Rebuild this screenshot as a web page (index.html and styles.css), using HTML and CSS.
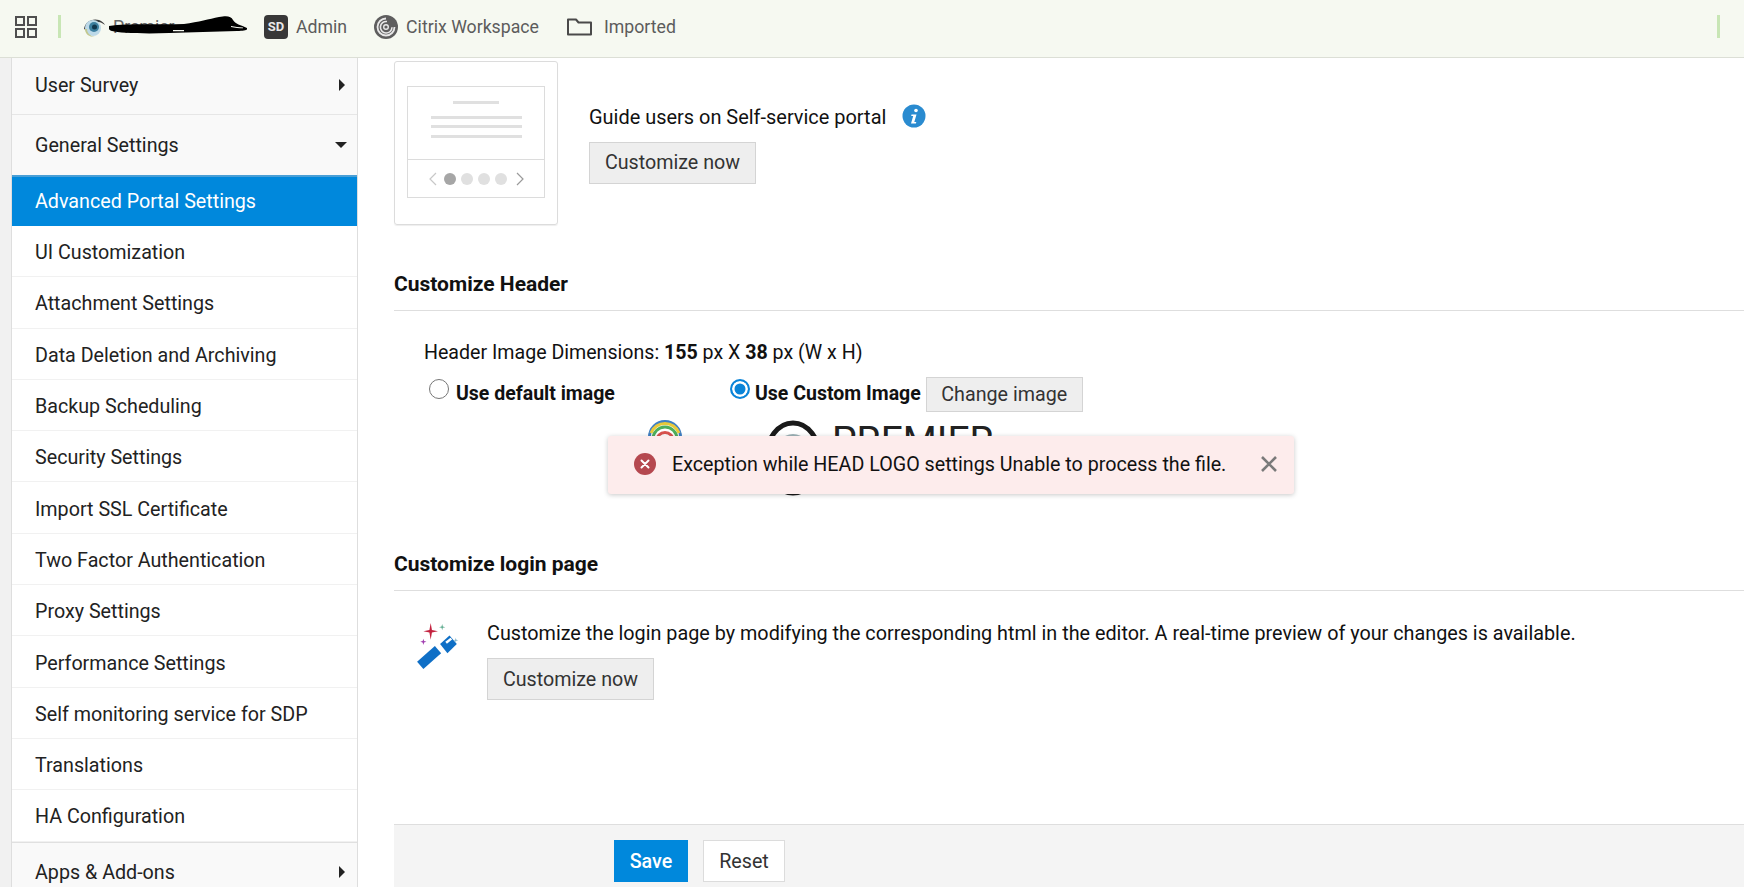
FILE: index.html
```html
<!DOCTYPE html>
<html lang="en">
<head>
<meta charset="utf-8">
<title>Advanced Portal Settings</title>
<link rel="stylesheet" href="styles.css">
</head>
<body>
<header class="topbar">
  <svg class="grid-icon" viewBox="0 0 22 22" width="22" height="22"><g fill="none" stroke="#4f4f4f" stroke-width="2"><rect x="1" y="1" width="8" height="8"/><rect x="13" y="1" width="8" height="8"/><rect x="1" y="13" width="8" height="8"/><rect x="13" y="13" width="8" height="8"/></g></svg>
  <span class="tick"></span>
  <div class="bookmark bm-eye">
    <svg viewBox="0 0 24 20" width="24" height="20"><path d="M2 12C3 5 10 1 17 3c3 1 5 3 6 5-3-3-8-4-12-3C7 6 4 9 4 13z" fill="#3c3c3c"/><ellipse cx="11" cy="11" rx="8" ry="8" fill="#bcd9e8"/><circle cx="12" cy="10" r="5" fill="#3c7f9f"/><circle cx="12.500" cy="10" r="2.500" fill="#10364d"/><path d="M3 12c0 5 4 8 10 8-5-1-8-4-8-8z" fill="#c2c88f"/></svg>
    <span class="bm-hidden">Premier</span>
    <svg class="scribble" viewBox="0 0 138 18" width="138" height="18"><path d="M0 10C20 7 50 9 75 8 90 6 100 3 110 1c8-1.500 12-1 14 3 2 4 8 5 14 8 1 2-2 3-10 3L60 17c-25 1-50 0-57-2C0 14-1 12 0 10z" fill="#000"/><path d="M64 14h11v1.200H64zM122 10c4 1 8 1 12 1.500v.8c-4 0-8-.3-12-1.300z" fill="#f6f9f1"/></svg>
  </div>
  <div class="bookmark bm-admin">
    <span class="sd-badge">SD</span>
    <span>Admin</span>
  </div>
  <div class="bookmark bm-citrix">
    <svg viewBox="0 0 24 24" width="24" height="24"><circle cx="12" cy="12" r="12" fill="#5e5e5e"/><path d="M12 3.500a8.500 8.500 0 1 0 8.500 8.500" fill="none" stroke="#e8e8e8" stroke-width="1.800"/><path d="M13 6.500a5.800 5.800 0 1 0 5 5.800" fill="none" stroke="#e8e8e8" stroke-width="1.600"/><circle cx="12" cy="12" r="2.300" fill="none" stroke="#e8e8e8" stroke-width="1.400"/></svg>
    <span>Citrix Workspace</span>
  </div>
  <div class="bookmark bm-folder">
    <svg viewBox="0 0 25 18" width="25" height="18"><path d="M1 16.500V1.500h8l2.500 3H24v12z" fill="none" stroke="#4a4a4a" stroke-width="2" stroke-linejoin="round"/></svg>
    <span>Imported</span>
  </div>
  <span class="tick tick-end"></span>
</header>

<div class="shell">
  <div class="strip"></div>
  <nav class="sidebar">
    <div class="nav-group nav-survey">User Survey<span class="caret-right"></span></div>
    <div class="nav-group nav-general">General Settings<span class="caret-down"></span></div>
    <div class="nav-item nav-active">Advanced Portal Settings</div>
    <div class="nav-item">UI Customization</div>
    <div class="nav-item">Attachment Settings</div>
    <div class="nav-item">Data Deletion and Archiving</div>
    <div class="nav-item">Backup Scheduling</div>
    <div class="nav-item">Security Settings</div>
    <div class="nav-item">Import SSL Certificate</div>
    <div class="nav-item">Two Factor Authentication</div>
    <div class="nav-item">Proxy Settings</div>
    <div class="nav-item">Performance Settings</div>
    <div class="nav-item">Self monitoring service for SDP</div>
    <div class="nav-item">Translations</div>
    <div class="nav-item">HA Configuration</div>
    <div class="nav-group nav-apps">Apps &amp; Add-ons<span class="caret-right"></span></div>
  </nav>

  <main class="content">
    <section class="guide">
      <div class="preview-card">
        <div class="preview">
          <div class="preview-top">
            <span class="pl pl-short"></span>
            <span class="pl pl-one"></span>
            <span class="pl pl-two"></span>
            <span class="pl pl-three"></span>
          </div>
          <div class="preview-nav">
            <svg class="chev-left" viewBox="0 0 8 14" width="8" height="14"><path d="M7 1 1 7l6 6" fill="none" stroke="#c8c8c8" stroke-width="1.200"/></svg>
            <span class="dot dot-on"></span><span class="dot"></span><span class="dot"></span><span class="dot"></span>
            <svg class="chev-right" viewBox="0 0 8 14" width="8" height="14"><path d="m1 1 6 6-6 6" fill="none" stroke="#9a9a9a" stroke-width="1.200"/></svg>
          </div>
        </div>
      </div>
      <div class="guide-text">
        <div class="guide-line">Guide users on Self-service portal
          <svg class="info" viewBox="0 0 24 24" width="24" height="24"><circle cx="12" cy="12" r="11.500" fill="#2a8bd0"/><circle cx="14" cy="6.500" r="1.800" fill="#fff"/><path d="M9.500 10.500h5l-2.200 7.500h2l-.4 1.500H9l2.200-7.500H9.200z" fill="#fff"/></svg>
        </div>
        <button class="btn">Customize now</button>
      </div>
    </section>

    <h2 class="section-title title-header">Customize Header</h2>
    <div class="header-form">
      <p class="dims">Header Image Dimensions: <b>155</b> px X <b>38</b> px (W x H)</p>
      <div class="radio-row">
        <span class="radio"></span><label class="radio-label label-default">Use default image</label>
        <span class="radio radio-on"></span><label class="radio-label label-custom">Use Custom Image</label>
        <button class="btn btn-change">Change image</button>
      </div>
      <div class="logo-row">
        <svg class="logo-rings" viewBox="0 0 34 34" width="34" height="34"><g fill="none" stroke-width="3"><circle cx="17" cy="17" r="15.500" stroke="#3f7fc4"/><path d="M3 13A15 15 0 0 1 31 13" stroke="#e8c93a"/><circle cx="17" cy="19" r="12" stroke="#4fae5c"/><circle cx="17" cy="21" r="8.500" stroke="#d9534f"/></g></svg>
        <svg class="logo-arc" viewBox="0 0 64 76" width="64" height="76"><ellipse cx="32" cy="38" rx="27" ry="35" fill="none" stroke="#1a1a1a" stroke-width="5"/><ellipse cx="32" cy="38" rx="18" ry="23" fill="none" stroke="#9fb4b8" stroke-width="2"/></svg>
        <span class="logo-name">PREMIER</span>
      </div>
    </div>

    <h2 class="section-title title-login">Customize login page</h2>
    <div class="login-row">
      <svg class="wand" viewBox="0 0 40 44" width="42" height="46"><path d="M13 0l1.200 6.800L20 8l-5.800 1.200L13 16l-1.200-6.800L6 8l5.800-1.200z" fill="#c3223f"/><path d="M24 1l.6 2.400L27 4l-2.400.6L24 7l-.6-2.400L21 4l2.400-.6z" fill="#5aa98c"/><path d="M6 15l.7 2.300L9 18l-2.300.7L6 21l-.7-2.300L3 18l2.300-.7z" fill="#a23fb0"/><path d="M37 14l.5 2L39.500 16.500l-2 .5-.5 2-.5-2-2-.5 2-.5z" fill="#7fb3c8"/><path d="M0 37 17 22l6 7L6 44z" fill="#0f6fc6"/><path d="M22 20l9-8 7 8-9 9z" fill="#0f6fc6"/><path d="M27 18l5-4 1.500 1.800-5 4z" fill="#fff"/></svg>
      <div class="login-text">
        <p>Customize the login page by modifying the corresponding html in the editor. A real-time preview of your changes is available.</p>
        <button class="btn">Customize now</button>
      </div>
    </div>

    <footer class="actions">
      <button class="btn-save">Save</button>
      <button class="btn-reset">Reset</button>
    </footer>
  </main>
</div>

<div class="toast">
  <svg class="toast-icon" viewBox="0 0 22 22" width="22" height="22"><circle cx="11" cy="11" r="11" fill="#b5484f"/><path d="M7.500 7.500l7 7m0-7l-7 7" stroke="#fff" stroke-width="2" stroke-linecap="round"/></svg>
  <span class="toast-text">Exception while HEAD LOGO settings Unable to process the file.</span>
  <svg class="toast-close" viewBox="0 0 18 18" width="18" height="18"><path d="M2 2l14 14M16 2L2 16" stroke="#7a7a7a" stroke-width="2.600"/></svg>
</div>
</body>
</html>
```
FILE: styles.css
```css
* { box-sizing: border-box; }
html, body { margin: 0; height: 887px; overflow: hidden; }
body {
  font-family: Roboto, "Liberation Sans", sans-serif;
  font-size: 19.7px;
  color: #111;
  background: #fff;
  display: flex;
  flex-direction: column;
}
.topbar {
  height: 58px;
  flex: none;
  background: #f6f9f1;
  border-bottom: 1px solid #dcdfd6;
  display: flex;
  align-items: center;
  padding-left: 15px;
  color: #5c5c5c;
  font-size: 17.7px;
  position: relative;
  padding-bottom: 4px;
}
.tick { width: 3px; height: 23px; background: #c8e6b5; margin-left: 21px; flex: none; }
.tick-end { margin-left: auto; margin-right: 24px; }
.bookmark { display: flex; align-items: center; flex: none; line-height: 24px; }
.bm-eye { margin-left: 21px; width: 166px; position: relative; }
.bm-hidden { margin-left: 7px; color: #666; }
.scribble { position: absolute; left: 27px; top: 1px; }
.bm-admin { margin-left: 16px; gap: 8px; }
.sd-badge {
  width: 24px; height: 24px; border-radius: 4px;
  background: #383838; color: #e8e8e8;
  font-size: 13px; font-weight: 700;
  display: flex; align-items: center; justify-content: center;
}
.bm-citrix { margin-left: 27px; gap: 8px; }
.bm-folder { margin-left: 28px; gap: 12px; }

.shell { flex: 1; display: flex; min-height: 0; }
.strip { width: 11px; background: #f1f1f1; flex: none; }
.sidebar {
  width: 347px;
  flex: none;
  border-left: 1px solid #dedede;
  border-right: 1px solid #dedede;
  background: #fff;
  overflow: hidden;
}
.nav-group {
  background: #f9f9f9;
  display: flex;
  align-items: center;
  justify-content: space-between;
  padding: 0 12px 0 23px;
  border-bottom: 1px solid #e6e6e6;
  color: #222;
}
.nav-survey { height: 57px; padding-bottom: 2px; }
.nav-general { height: 60px; padding-bottom: 0; border-bottom: 0; }
.nav-apps { height: 60px; padding-bottom: 0; border-top: 1px solid #e0e0e0; border-bottom: 0; }
.nav-item {
  height: 51.3px;
  padding: 3px 0 0 23px;
  display: flex;
  align-items: center;
  border-bottom: 1px solid #f1f1f1;
  color: #222;
}
.nav-active {
  background: #0088dc;
  color: #fff;
  border-bottom: 0;
  border-top: 2px solid #4a9fd6;
  height: 51px;
  padding: 1px 0 1px 23px;
}
.caret-right { width: 0; height: 0; border-left: 6px solid #222; border-top: 6px solid transparent; border-bottom: 6px solid transparent; }
.caret-down { width: 0; height: 0; border-top: 6px solid #222; border-left: 6.500px solid transparent; border-right: 6.500px solid transparent; margin-right: -2px; }

.content { flex: 1; min-width: 0; display: flex; flex-direction: column; padding-left: 36px; }
.guide { display: flex; align-items: center; gap: 31px; margin-top: 3px; }
.preview-card {
  width: 164px; height: 164px;
  border: 1px solid #dcdcdc;
  border-radius: 3px;
  padding: 24px 12px 0;
  box-shadow: 0 1px 1px #eee;
}
.preview { border: 1px solid #dcdcdc; height: 112px; display: flex; flex-direction: column; }
.preview-top { height: 73px; border-bottom: 1px solid #dcdcdc; display: flex; flex-direction: column; align-items: center; flex: none; }
.pl { display: block; height: 3px; background: #e0e0e0; width: 91px; }
.pl-short { width: 46px; margin-top: 14px; }
.pl-one { margin-top: 12px; }
.pl-two { margin-top: 6px; }
.pl-three { margin-top: 7px; }
.preview-nav { flex: 1; display: flex; align-items: center; justify-content: center; gap: 5px; }
.chev-left { margin-right: 2px; }
.chev-right { margin-left: 4px; }
.dot { width: 12px; height: 12px; border-radius: 50%; background: #e0e0e0; }
.dot-on { background: #a6a6a6; }
.guide-text { display: flex; flex-direction: column; align-items: flex-start; gap: 13px; margin-top: 2px; }
.guide-line { line-height: 24px; display: flex; align-items: center; gap: 16px; white-space: nowrap; font-size: 19.95px; }
.info { margin-top: -1px; }
.btn {
  font: inherit;
  font-size: 19.7px;
  color: #333;
  background: #eee;
  border: 1px solid #d4d4d4;
  height: 42px;
  width: 167px;
  padding: 0;
}
.section-title { margin: 0; font-size: 21px; font-weight: 700; line-height: 26px; padding-bottom: 13px; border-bottom: 1px solid #dedede; }
.title-header { margin-top: 46px; }
.header-form { padding-left: 30px; }
.dims { margin: 30px 0 0; line-height: 24px; font-size: 19.6px; }
.dims b { font-weight: 700; }
.radio-row { display: flex; align-items: center; margin-top: 12px; height: 35px; padding-left: 5px; }
.radio {
  width: 20px; height: 20px; border-radius: 50%;
  border: 1px solid #777; background: #fff; flex: none;
  margin-bottom: 12px;
}
.radio-on { border: 2px solid #0a84d8; box-shadow: inset 0 0 0 2.500px #fff; background: #0a84d8; }
.radio-label { font-weight: 700; white-space: nowrap; padding-bottom: 3px; font-size: 19.5px; }
.label-default { margin-left: 7px; width: 274px; }
.label-custom { margin-left: 5px; }
.btn-change { width: 157px; height: 35px; margin-left: 5px; }
.logo-row { height: 80px; display: flex; margin-top: 8px; }
.logo-rings { margin-left: 224px; flex: none; }
.logo-arc { margin-left: 79px; flex: none; }
.logo-name { margin-left: 7px; margin-top: -2px; font-size: 39px; line-height: 46px; color: #222; }
.title-login { margin-top: 51px; }
.login-row { display: flex; padding-left: 23px; margin-top: 31px; }
.wand { margin-top: 1px; flex: none; }
.login-text { margin-left: 28px; }
.login-text p { margin: 0 0 12px; line-height: 24px; font-size: 19.8px; white-space: nowrap; }
.actions {
  margin-top: auto;
  height: 63px;
  background: #f4f4f4;
  border-top: 1px solid #dedede;
  padding: 15px 0 0 220px;
  display: flex;
  align-items: flex-start;
  gap: 15px;
}
.btn-save, .btn-reset { font: inherit; height: 42px; padding: 0; }
.btn-save { width: 74px; background: #0088dc; border: 0; color: #fff; font-weight: 500; }
.btn-reset { width: 82px; background: #fff; border: 1px solid #dcdcdc; color: #333; }

.toast {
  position: absolute;
  left: 608px; top: 436px;
  width: 686px; height: 58px;
  background: #fdecec;
  border-radius: 3px;
  box-shadow: 0 1px 5px rgba(0,0,0,.22);
  display: flex;
  align-items: center;
  padding: 0 16px 2px 26px;
}
.toast-icon { flex: none; }
.toast-text { margin-left: 16px; }
.toast-close { margin-left: auto; }
```
